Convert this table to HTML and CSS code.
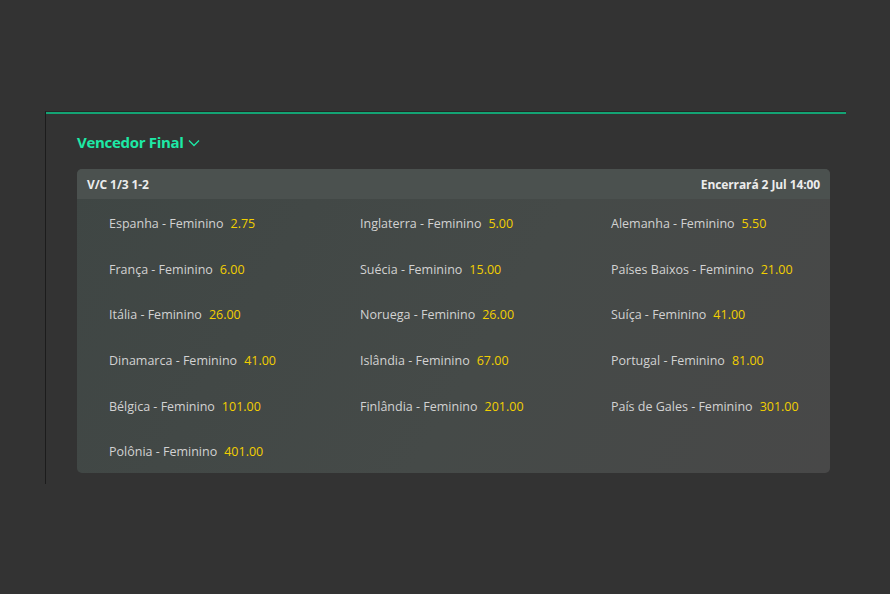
FILE: index.html
```html
<!DOCTYPE html>
<html lang="pt">
<head>
<meta charset="utf-8">
<link rel="stylesheet" href="styles.css">
</head>
<body>
<div class="page">
  <section class="market">
    <h2 class="market-title">Vencedor Final
      <svg class="chev" width="12" height="8" viewBox="0 0 12 8"><path d="M1 1.5 L6 6.5 L11 1.5" fill="none" stroke="#1de9a6" stroke-width="1.3"/></svg>
    </h2>
    <div class="card">
      <div class="card-head">
        <span class="head-left">V/C 1/3 1-2</span>
        <span class="head-right">Encerrará 2 Jul 14:00</span>
      </div>
      <div class="grid">
        <div class="sel"><span class="name">Espanha - Feminino</span><span class="odd">2.75</span></div>
        <div class="sel"><span class="name">Inglaterra - Feminino</span><span class="odd">5.00</span></div>
        <div class="sel"><span class="name">Alemanha - Feminino</span><span class="odd">5.50</span></div>
        <div class="sel"><span class="name">França - Feminino</span><span class="odd">6.00</span></div>
        <div class="sel"><span class="name">Suécia - Feminino</span><span class="odd">15.00</span></div>
        <div class="sel"><span class="name">Países Baixos - Feminino</span><span class="odd">21.00</span></div>
        <div class="sel"><span class="name">Itália - Feminino</span><span class="odd">26.00</span></div>
        <div class="sel"><span class="name">Noruega - Feminino</span><span class="odd">26.00</span></div>
        <div class="sel"><span class="name">Suíça - Feminino</span><span class="odd">41.00</span></div>
        <div class="sel"><span class="name">Dinamarca - Feminino</span><span class="odd">41.00</span></div>
        <div class="sel"><span class="name">Islândia - Feminino</span><span class="odd">67.00</span></div>
        <div class="sel"><span class="name">Portugal - Feminino</span><span class="odd">81.00</span></div>
        <div class="sel"><span class="name">Bélgica - Feminino</span><span class="odd">101.00</span></div>
        <div class="sel"><span class="name">Finlândia - Feminino</span><span class="odd">201.00</span></div>
        <div class="sel"><span class="name">País de Gales - Feminino</span><span class="odd">301.00</span></div>
        <div class="sel"><span class="name">Polônia - Feminino</span><span class="odd">401.00</span></div>
      </div>
    </div>
  </section>
</div>
</body>
</html>
```

FILE: styles.css
```css
* { box-sizing: border-box; }
html, body {
  margin: 0;
  padding: 0;
  background: #333333;
  font-family: "Open Sans", "Noto Sans", "Liberation Sans", sans-serif;
}
.page {
  padding: 111px 44px 0 45px;
  height: 594px;
}
.market {
  width: 801px;
  height: 373px;
  border-left: 1px solid #1c1c1c;
  border-top: 1px solid #262626;
  box-shadow: inset 0 2px 0 #14a374;
  padding: 19px 16px 0 31px;
}
.market-title {
  margin: 0 0 16px 0;
  height: 22px;
  font-size: 15px;
  font-weight: 700;
  color: #1de9a6;
  display: flex;
  align-items: center;
  gap: 4px;
  letter-spacing: -0.3px;
}
.chev { margin-top: 2px; }
.card {
  border-radius: 5px;
  overflow: hidden;
  background: linear-gradient(120deg, #3f4644 0%, #454a48 55%, #484848 100%);
}
.card-head {
  height: 30px;
  background: #4b514f;
  display: flex;
  justify-content: space-between;
  align-items: center;
  padding: 0 10px;
  font-size: 12px;
  font-weight: 700;
  color: #ececec;
  letter-spacing: -0.1px;
}
.grid {
  display: grid;
  grid-template-columns: repeat(3, 1fr);
  grid-auto-rows: 45.6px;
  padding: 2px 0 0 0;
  height: 274px;
}
.sel {
  padding-left: 32px;
  display: flex;
  align-items: center;
  gap: 7px;
  font-size: 12.5px;
}
.name { color: #d2d2d2; }
.odd { color: #f2cf00; }
```
